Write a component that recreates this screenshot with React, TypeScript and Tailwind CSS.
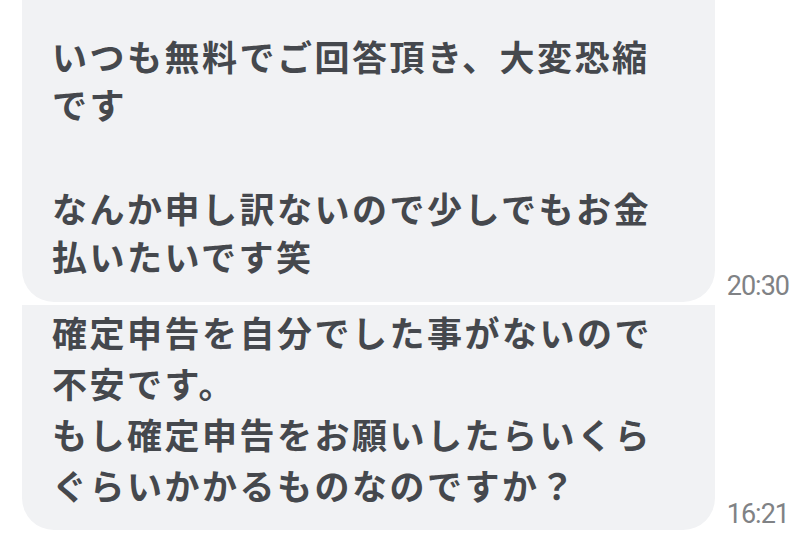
import React from 'react';

const FONT = { fontFamily: '"Noto Sans CJK JP", "Noto Sans", sans-serif' };

function Stamp({ time }: { time: string }) {
  return (
    <div
      className="flex-1 pr-[11px] pb-[2px] text-right text-[27px] leading-none tracking-[-1px] text-[#808285]"
      style={{ fontFamily: 'Roboto, "Liberation Sans", sans-serif' }}
    >
      {time}
    </div>
  );
}

export default function App() {
  return (
    <div className="h-[543px] w-[800px] overflow-hidden bg-white" style={FONT}>
      {/* first bubble, top runs off screen */}
      <div className="-mt-[40px] flex items-end">
        <div className="ml-[22px] w-[693px] rounded-b-[32px] bg-[#f1f2f4] pt-[72px] pb-[22px] pl-[30px] text-[35px] leading-[48px] font-semibold tracking-[2.5px] text-[#45484d]">
          <p>いつも無料でご回答頂き、大変恐縮</p>
          <p>です</p>
          <p className="mt-[56px]">なんか申し訳ないので少しでもお金</p>
          <p>払いたいです笑</p>
        </div>
        <Stamp time="20:30" />
      </div>

      <div className="mt-[3px] flex items-end">
        <div className="ml-[22px] w-[693px] rounded-b-[32px] bg-[#f1f2f4] pt-[1px] pb-[20px] pl-[30px] text-[35px] leading-[51px] font-semibold tracking-[2.5px] text-[#45484d]">
          <p>確定申告を自分でした事がないので</p>
          <p>不安です。</p>
          <p>もし確定申告をお願いしたらいくら</p>
          <p>ぐらいかかるものなのですか？</p>
        </div>
        <Stamp time="16:21" />
      </div>
    </div>
  );
}
